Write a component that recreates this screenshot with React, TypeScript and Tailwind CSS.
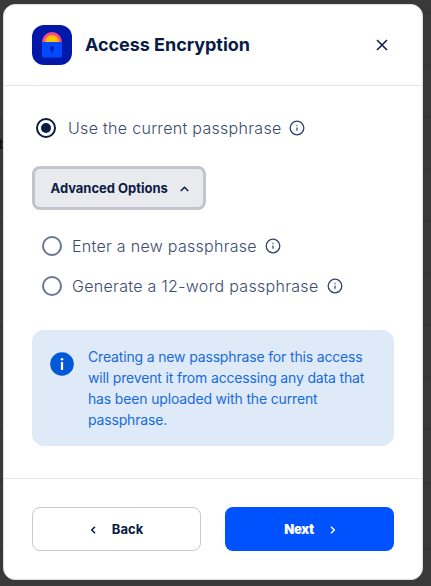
import React from 'react';

function InfoIcon() {
  return (
    <svg className="block size-4 shrink-0" viewBox="0 0 16 16" fill="none">
      <circle cx="8" cy="8" r="6.8" stroke="#30426d" strokeWidth="1.3" />
      <path d="M8 7.4v3.4" stroke="#4a5a80" strokeWidth="1.4" />
      <circle cx="8" cy="5.4" r="0.75" fill="#4a5a80" />
    </svg>
  );
}

function Radio({ checked = false }: { checked?: boolean }) {
  const color = checked ? '#091c45' : '#6b7690';
  return (
    <svg className="block size-5 shrink-0" viewBox="0 0 20 20" fill="none">
      <circle cx="10" cy="10" r="9" stroke={color} strokeWidth="2" />
      {checked && <circle cx="10" cy="10" r="5" fill={color} />}
    </svg>
  );
}

function LockLogo() {
  return (
    <svg className="block size-10 shrink-0" viewBox="0 0 40 40">
      <rect width="40" height="40" rx="12" fill="#0218a7" />
      <path d="M10 17a10 10 0 0 1 20 0z" fill="#ff458b" />
      <path d="M13 17a7 7 0 0 1 14 0z" fill="#ffc600" />
      <rect x="10" y="17" width="20" height="15.5" fill="#0149ff" />
      <circle cx="20" cy="23.3" r="2" fill="#0218a7" />
      <path d="M19.2 24h1.6v3.5h-1.6z" fill="#0218a7" />
    </svg>
  );
}

const rowLines = [13, 65, 117, 169, 221, 273, 325, 377, 429, 482, 549];

export default function App() {
  return (
    <div className="relative h-[586px] w-[431px] overflow-hidden bg-[#393939] pt-1 pl-[3px] font-['Inter',sans-serif]">
      {rowLines.map((y) => (
        <div key={y} className="absolute left-0 h-px w-full bg-[#323232]" style={{ top: y }} />
      ))}
      <span className="absolute top-[134px] -left-[2px] text-sm leading-5 font-bold text-[#0c0f16]">t</span>
      <div className="relative flex h-[576px] w-[420px] flex-col rounded-xl border border-[#dedede] bg-white text-[#091c45]">
        <header className="flex h-[81px] items-center border-b border-[#e6e7e9] px-7">
          <LockLogo />
          <h1 className="ml-[13px] text-lg font-bold tracking-[-0.04px]">Access Encryption</h1>
          <button className="mr-[6px] ml-auto" aria-label="Close">
            <svg className="block size-3" viewBox="0 0 12 12" fill="none" stroke="#091c45" strokeWidth="1.5">
              <path d="M1 1l10 10M11 1L1 11" />
            </svg>
          </button>
        </header>
        <main className="flex flex-1 flex-col items-start px-7 pt-8">
          <div className="flex h-5 items-center pl-1">
            <Radio checked />
            <span className="ml-3 text-base font-light tracking-[0.3px] text-[#3c4b70]">Use the current passphrase</span>
            <span className="ml-[7.5px]"><InfoIcon /></span>
          </div>
          <button className="mt-[28px] flex h-11 w-[174px] items-center rounded-lg border-[3px] border-[#c2c5d0] bg-[#e9eaee] pt-px pl-[15.5px] text-[13px] font-bold tracking-[-0.02px]">
            Advanced Options
            <svg className="ml-[12.5px] block h-[6px] w-[9px]" viewBox="0 0 9 6" fill="none" stroke="#091c45" strokeWidth="1.5">
              <path d="M0.8 5l3.7-3.7L8.2 5" />
            </svg>
          </button>
          <div className="mt-[26px] flex h-5 items-center pl-[10px]">
            <Radio />
            <span className="ml-[10px] text-base font-light tracking-[0.29px] text-[#3c4b70]">Enter a new passphrase</span>
            <span className="ml-2"><InfoIcon /></span>
          </div>
          <div className="mt-5 flex h-5 items-center pl-[10px]">
            <Radio />
            <span className="ml-[10px] text-base font-light tracking-[0.31px] text-[#3c4b70]">Generate a 12-word passphrase</span>
            <span className="ml-2"><InfoIcon /></span>
          </div>
          <div className="mt-[34px] flex h-[116px] w-[362px] rounded-xl bg-[#dfeaf8] pt-4 pl-[18px]">
            <svg className="mt-[6px] block size-6 shrink-0" viewBox="0 0 24 24">
              <circle cx="12" cy="12" r="11.8" fill="#0059d6" />
              <rect x="10.9" y="10" width="2.2" height="8" fill="#fff" />
              <circle cx="12" cy="7.3" r="1.3" fill="#fff" />
            </svg>
            <p className="ml-[14px] w-[286px] text-sm leading-[21px] tracking-[-0.16px] text-[#196adb]">
              Creating a new passphrase for this access<br />
              will prevent it from accessing any data that<br />
              has been uploaded with the current<br />
              passphrase.
            </p>
          </div>
        </main>
        <footer className="flex h-[101px] gap-6 border-t border-[#e6e7e9] px-7 pt-7 text-[13px] font-bold">
          <button className="flex h-11 w-[169px] items-center justify-center gap-4 rounded-lg border border-[#c8cacd] pt-px">
            <svg className="block h-2 w-[6px]" viewBox="0 0 6 8" fill="none" stroke="#091c45" strokeWidth="1.5">
              <path d="M5 0.7L1.7 4 5 7.3" />
            </svg>
            Back
          </button>
          <button className="flex h-11 w-[169px] items-center justify-center gap-4 rounded-lg bg-[#0052ff] pt-px pl-px font-black tracking-[-0.35px] text-white">
            Next
            <svg className="block h-2 w-[6px]" viewBox="0 0 6 8" fill="none" stroke="#fff" strokeWidth="1.5">
              <path d="M1 0.7L4.3 4 1 7.3" />
            </svg>
          </button>
        </footer>
      </div>
    </div>
  );
}
